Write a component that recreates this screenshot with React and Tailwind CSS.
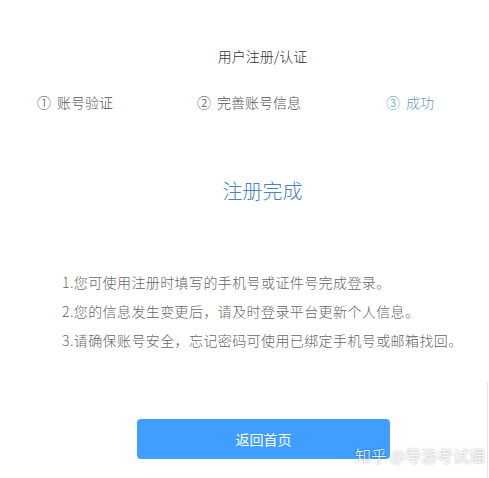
const steps = [
  { num: '①', label: '账号验证', color: 'text-[#555555]' },
  { num: '②', label: '完善账号信息', color: 'text-[#555555]' },
  { num: '③', label: '成功', color: 'text-[#5a9ccb]' },
];

const notes = [
  '1.您可使用注册时填写的手机号或证件号完成登录。',
  '2.您的信息发生变更后，请及时登录平台更新个人信息。',
  '3.请确保账号安全，忘记密码可使用已绑定手机号或邮箱找回。',
];

export default function App() {
  return (
    <div className="relative h-[478px] w-[489px] overflow-hidden bg-white font-['Noto_Sans_CJK_SC',sans-serif] font-light">
      {/* header */}
      <div className="pl-[36px] pt-[46px] text-center text-[14px] leading-[20px] text-[#333333]">
        用户注册/认证
      </div>

      {/* steps */}
      <div className="mt-[26px] grid grid-cols-[160px_189px_auto] pl-[37px] text-[14px] leading-[20px]">
        {steps.map((s) => (
          <div key={s.label} className={`flex gap-[6px] ${s.color}`}>
            <span>{s.num}</span>
            <span>{s.label}</span>
          </div>
        ))}
      </div>

      {/* result */}
      <div className="mt-[65px] pl-[36px] text-center text-[20px] leading-[28px] text-[#4a82bb]">
        注册完成
      </div>

      <ul className="mt-[63px] pl-[62px] text-[14px] leading-[29px] tracking-[0.4px] text-[#666666]">
        {notes.map((n) => (
          <li key={n}>{n}</li>
        ))}
      </ul>

      <div className="mt-[64px] pl-[137px]">
        <button className="h-[40px] w-[253px] rounded-[4px] bg-[#409eff] text-[14px] font-normal text-white">
          返回首页
        </button>
      </div>

      {/* watermark */}
      <div className="absolute left-[355px] top-[444px] text-[16px] leading-[22px] text-white [text-shadow:0_0_2px_rgba(0,0,0,0.45)]">
        知乎 @导游考试通
      </div>
      <div className="absolute right-[1px] top-[382px] h-[96px] w-px bg-[#e6e6e6]" />
    </div>
  );
}
